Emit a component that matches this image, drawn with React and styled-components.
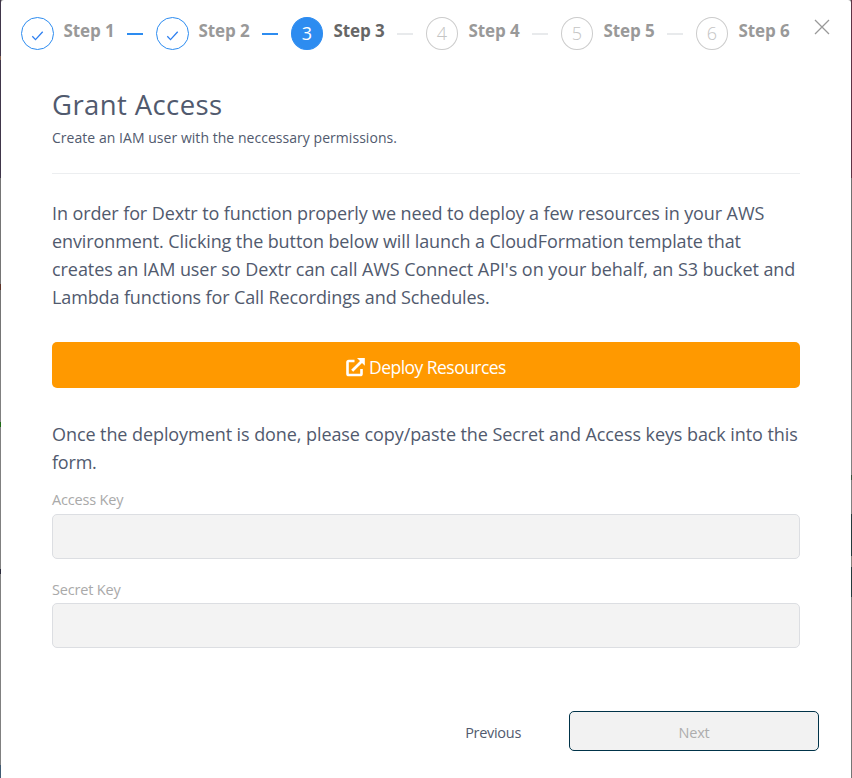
import React from 'react';
import styled, { createGlobalStyle } from 'styled-components';

const Global = createGlobalStyle`
  * { box-sizing: border-box; }
  body { margin: 0; background: #808080; font-family: "Open Sans", "Noto Sans", sans-serif; font-weight: 400; color: #515a6e; }
  h1, p { margin: 0; font-weight: inherit; }
  button { font-family: inherit; font-weight: inherit; margin: 0; padding: 0; }
`;

const Backdrop = styled.div`
  height: 778px;
  padding: 0 1px;
  overflow: hidden;
  background:
    linear-gradient(#40364a 0 56px, #86604f 56px 60px, #40364a 60px 178px, #757575 178px 284px, #5d3328 284px 290px, #757575 290px 370px, #808080 370px 422px, #1d6b14 422px 427px, #808080 427px 569px, #2b2b3c 569px 574px, #808080 574px 765px, #405a72 765px) left / 1px 100% no-repeat,
    linear-gradient(#5c3445 0 178px, #707070 178px 370px, #808080 370px 475px, #33523c 475px 480px, #808080 480px 514px, #243a3c 514px 556px, #85807c 556px 567px, #243a3c 567px 597px, #757575 597px) right / 1px 100% no-repeat;
`;

const Modal = styled.main`
  height: 778px;
  padding: 17px 0 0 20px;
  background: #fff;
  border-radius: 3px 3px 0 0;
`;

const Header = styled.header`
  display: flex;
  height: 33px;
`;

const Steps = styled.ol`
  display: flex;
  margin: 0;
  padding: 0;
  list-style: none;
`;

const Step = styled.li`
  display: flex;
  width: 135px;
  &:last-child { width: 114px; }
`;

const StepCircle = styled.span`
  display: flex;
  flex: none;
  align-items: center;
  justify-content: center;
  width: ${p => (p.$status === 'finish' ? '33px' : '32px')};
  height: 33px;
  margin-right: ${p => (p.$status === 'finish' ? '0' : '1px')};
  border: 1px solid ${p => (p.$status === 'wait' ? '#ccc' : '#2d8cf0')};
  border-radius: 50%;
  background: ${p => (p.$status === 'current' ? '#2d8cf0' : '#fff')};
  color: ${p => (p.$status === 'current' ? '#fff' : '#c4c4c4')};
  font-size: 18px;
  font-weight: ${p => (p.$status === 'current' ? 400 : 300)};
  line-height: 33px;
  svg { margin-top: 5px; }
`;

const StepTitle = styled.span`
  width: 52px;
  margin-left: 9.5px;
  color: ${p => (p.$status === 'current' ? '#666' : '#999')};
  font-size: 17px;
  font-weight: 700;
  line-height: 28px;
  letter-spacing: -0.08px;
  white-space: nowrap;
`;

const StepLine = styled.span`
  width: 16px;
  height: 2px;
  margin: 16px 0 0 11.5px;
  background: ${p => (p.$status === 'finish' ? '#2d8cf0' : '#e8eaec')};
`;

const CloseButton = styled.button`
  width: 16px;
  height: 16px;
  margin: 2px 0 0 4px;
  border: 0;
  background: none;
  svg { display: block; }
`;

const Content = styled.section`
  width: 748px;
  margin-left: 31px;
`;

const Title = styled.h1`
  padding-top: 36px;
  font-size: 27.5px;
  line-height: 38px;
  letter-spacing: 0.4px;
`;

const Subtitle = styled.p`
  height: 50px;
  padding-top: 3px;
  border-bottom: 1px solid #eceef0;
  font-size: 14px;
  line-height: 22px;
  letter-spacing: 0.04px;
`;

const Paragraph = styled.p`
  margin-top: ${p => p.$top}px;
  font-size: 18px;
  line-height: 28px;
`;

const TextLine = styled.span`
  display: block;
  white-space: nowrap;
  letter-spacing: ${p => p.$track}px;
`;

const DeployButton = styled.button`
  display: flex;
  align-items: center;
  justify-content: center;
  gap: 4px;
  width: 100%;
  height: 46px;
  margin-top: 31px;
  padding-top: 4px;
  border: 0;
  border-radius: 5px;
  background: #ff9900;
  color: #fff;
  font-size: 17.5px;
  letter-spacing: -0.54px;
`;

const Field = styled.label`
  display: block;
  margin-top: ${p => p.$top}px;
  color: #a9a9a9;
  font-size: 14.5px;
  line-height: 22px;
  letter-spacing: -0.18px;
`;

const Input = styled.input`
  display: block;
  width: 100%;
  height: 45px;
  margin-top: ${p => p.$top}px;
  border: 1px solid #dcdee2;
  border-radius: 5px;
  background: #f3f3f3;
`;

const Footer = styled.footer`
  display: flex;
  justify-content: flex-end;
  gap: 48px;
  margin: 63px 32px 0 0;
`;

const PreviousButton = styled.button`
  height: 40px;
  padding-top: 2px;
  border: 0;
  background: none;
  color: #515a6e;
  font-size: 14.5px;
  letter-spacing: -0.3px;
`;

const NextButton = styled.button`
  width: 250px;
  height: 40px;
  padding-top: 3px;
  border: 1px solid #003349;
  border-radius: 5px;
  background: #f2f2f2;
  color: #adadad;
  font-size: 14.5px;
  letter-spacing: -0.2px;
`;

const CheckIcon = () => (
  <svg width="14" height="12" viewBox="0 0 14 12" fill="none" stroke="#2d7ff0" strokeWidth="1.3">
    <path d="M1.3 6.3L4.5 9.6L11.7 1.8" />
  </svg>
);

const CloseIcon = () => (
  <svg width="16" height="16" viewBox="0 0 16 16" stroke="#999" strokeWidth="1.3">
    <path d="M1 1L15 15M15 1L1 15" />
  </svg>
);

const ExternalIcon = () => (
  <svg width="19" height="19" viewBox="0 0 19 19" fill="none" stroke="#fff">
    <path d="M8.5 3H2.8Q1.5 3 1.5 4.3V15.7Q1.5 17 2.8 17H14.2Q15.5 17 15.5 15.7V11" strokeWidth="2.6" />
    <path d="M6.2 12.8L15.5 3.5" strokeWidth="2.8" />
    <path d="M11 0H18.8V7.8Z" fill="#fff" stroke="none" />
  </svg>
);

const statuses = ['finish', 'finish', 'current', 'wait', 'wait', 'wait'];

const intro = [
  ['In order for Dextr to function properly we need to deploy a few resources in your AWS', -0.1],
  ['environment. Clicking the button below will launch a CloudFormation template that', -0.1],
  ["creates an IAM user so Dextr can call AWS Connect API's on your behalf, an S3 bucket and", -0.065],
  ['Lambda functions for Call Recordings and Schedules.', -0.12],
];

const followUp = [
  ['Once the deployment is done, please copy/paste the Secret and Access keys back into this', -0.077],
  ['form.', -0.2],
];

const Lines = ({ lines }) => lines.map(([text, track]) => (
  <TextLine key={text} $track={track}>{text}</TextLine>
));

export default function App() {
  return (
    <Backdrop>
      <Global />
      <Modal>
        <Header>
          <Steps>
            {statuses.map((status, i) => (
              <Step key={i}>
                <StepCircle $status={status}>{status === 'finish' ? <CheckIcon /> : i + 1}</StepCircle>
                <StepTitle $status={status}>Step {i + 1}</StepTitle>
                {i < 5 && <StepLine $status={status} />}
              </Step>
            ))}
          </Steps>
          <CloseButton aria-label="Close"><CloseIcon /></CloseButton>
        </Header>
        <Content>
          <Title>Grant Access</Title>
          <Subtitle>Create an IAM user with the neccessary permissions.</Subtitle>
          <Paragraph $top={25}><Lines lines={intro} /></Paragraph>
          <DeployButton><ExternalIcon />Deploy Resources</DeployButton>
          <Paragraph $top={32}><Lines lines={followUp} /></Paragraph>
          <Field $top={13}>Access Key<Input $top={3} disabled /></Field>
          <Field $top={20}>Secret Key<Input $top={2} disabled /></Field>
        </Content>
        <Footer>
          <PreviousButton>Previous</PreviousButton>
          <NextButton disabled>Next</NextButton>
        </Footer>
      </Modal>
    </Backdrop>
  );
}
